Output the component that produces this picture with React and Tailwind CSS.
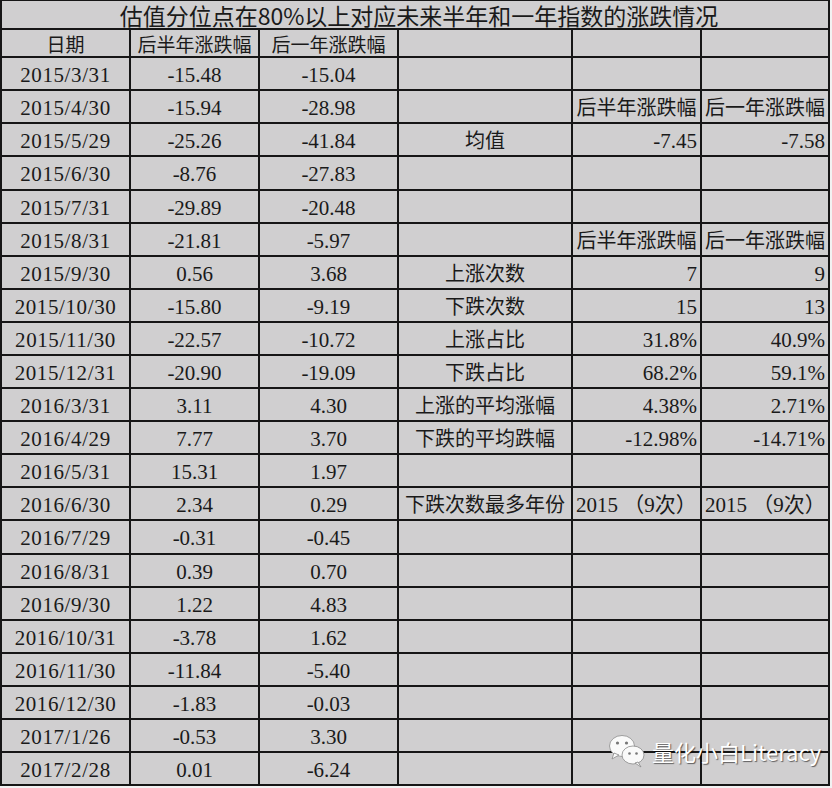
import React from "react";

const ROWS = [
  ["2015/3/31", "-15.48", "-15.04"],
  ["2015/4/30", "-15.94", "-28.98"],
  ["2015/5/29", "-25.26", "-41.84"],
  ["2015/6/30", "-8.76", "-27.83"],
  ["2015/7/31", "-29.89", "-20.48"],
  ["2015/8/31", "-21.81", "-5.97"],
  ["2015/9/30", "0.56", "3.68"],
  ["2015/10/30", "-15.80", "-9.19"],
  ["2015/11/30", "-22.57", "-10.72"],
  ["2015/12/31", "-20.90", "-19.09"],
  ["2016/3/31", "3.11", "4.30"],
  ["2016/4/29", "7.77", "3.70"],
  ["2016/5/31", "15.31", "1.97"],
  ["2016/6/30", "2.34", "0.29"],
  ["2016/7/29", "-0.31", "-0.45"],
  ["2016/8/31", "0.39", "0.70"],
  ["2016/9/30", "1.22", "4.83"],
  ["2016/10/31", "-3.78", "1.62"],
  ["2016/11/30", "-11.84", "-5.40"],
  ["2016/12/30", "-1.83", "-0.03"],
  ["2017/1/26", "-0.53", "3.30"],
  ["2017/2/28", "0.01", "-6.24"],
];

// right-hand summary block, keyed by data row index
const SIDE = {
  1: { kind: "head" },
  2: { label: "均值", a: "-7.45", b: "-7.58" },
  5: { kind: "head" },
  6: { label: "上涨次数", a: "7", b: "9" },
  7: { label: "下跌次数", a: "15", b: "13" },
  8: { label: "上涨占比", a: "31.8%", b: "40.9%" },
  9: { label: "下跌占比", a: "68.2%", b: "59.1%" },
  10: { label: "上涨的平均涨幅", a: "4.38%", b: "2.71%" },
  11: { label: "下跌的平均跌幅", a: "-12.98%", b: "-14.71%" },
  13: { label: "下跌次数最多年份", a: "2015 （9次）", b: "2015 （9次）", left: true },
};

const cell = "border-r-2 border-b-2 border-[#161616] flex items-center overflow-hidden whitespace-nowrap";
const cjk = "font-['Noto_Sans_CJK_SC','Noto_Sans',sans-serif]";
const serif = "font-['Liberation_Serif','Noto_Sans_CJK_SC',serif]";

function WeChatMark() {
  return (
    <svg width="38" height="34" viewBox="0 0 38 34">
      <g fill="#fafafa" stroke="#8a8a8a" strokeWidth="0.8">
        <ellipse cx="14" cy="12" rx="12.5" ry="10.5" />
        <path d="M6 19 L4 25 L11 21 Z" />
        <ellipse cx="25" cy="21" rx="11" ry="9" />
        <path d="M30 28 L33 33 L27 29 Z" />
      </g>
      <circle cx="9.5" cy="9" r="1.6" fill="#777" />
      <circle cx="18.5" cy="9" r="1.6" fill="#777" />
      <circle cx="21.5" cy="19.5" r="1.3" fill="#777" />
      <circle cx="28.5" cy="19.5" r="1.3" fill="#777" />
    </svg>
  );
}

export default function App() {
  return (
    <div className="w-[832px] h-[788px] bg-[#f2f2f2] text-[#1a1a1a]">
      <div className="relative w-[830px] bg-[#d0cfd0] border-l-2 border-t border-[#161616] grid grid-cols-[129px_129px_139px_174px_129px_128px]">
        {/* title */}
        <div className={`border-r-2 border-b-2 border-[#161616] col-span-6 h-[29px] flex items-center justify-center whitespace-nowrap ${cjk} text-[23px] leading-[24px] pl-2`}>
          估值分位点在80%以上对应未来半年和一年指数的涨跌情况
        </div>

        {/* header */}
        <div className={`${cell} h-[28px] justify-center ${cjk} text-[19px] leading-none`}>日期</div>
        <div className={`${cell} h-[28px] justify-center ${cjk} text-[19px] leading-none`}>后半年涨跌幅</div>
        <div className={`${cell} h-[28px] justify-center ${cjk} text-[19px] leading-none`}>后一年涨跌幅</div>
        <div className={`${cell} h-[28px]`} />
        <div className={`${cell} h-[28px]`} />
        <div className={`${cell} h-[28px]`} />

        {ROWS.map((r, i) => {
          const s = SIDE[i];
          const h = i === 3 || i === 14 ? "h-[34px]" : "h-[33px]";
          return (
            <React.Fragment key={r[0]}>
              <div className={`${cell} ${h} justify-center ${serif} text-[21px] tracking-[0.6px] pt-1`}>{r[0]}</div>
              <div className={`${cell} ${h} justify-center ${serif} text-[21px] pt-1`}>{r[1]}</div>
              <div className={`${cell} ${h} justify-center ${serif} text-[21px] pt-1`}>{r[2]}</div>
              {s && s.kind === "head" ? (
                <>
                  <div className={`${cell} ${h}`} />
                  <div className={`${cell} ${h} justify-center ${cjk} text-[20px] leading-none`}>后半年涨跌幅</div>
                  <div className={`${cell} ${h} justify-center ${cjk} text-[20px] leading-none`}>后一年涨跌幅</div>
                </>
              ) : s ? (
                <>
                  <div className={`${cell} ${h} justify-center ${cjk} text-[20px] leading-none`}>{s.label}</div>
                  <div className={`${cell} ${h} ${s.left ? "justify-start pl-[3px]" : "justify-end pr-[3px]"} ${serif} text-[21px] pt-1`}>{s.a}</div>
                  <div className={`${cell} ${h} ${s.left ? "justify-start pl-[3px]" : "justify-end pr-[3px]"} ${serif} text-[21px] pt-1`}>{s.b}</div>
                </>
              ) : (
                <>
                  <div className={`${cell} ${h}`} />
                  <div className={`${cell} ${h}`} />
                  <div className={`${cell} ${h}`} />
                </>
              )}
            </React.Fragment>
          );
        })}

        {/* watermark */}
        <div className="absolute left-[606px] top-[733px] flex items-center gap-[6px]">
          <WeChatMark />
          <span className={`${cjk} text-[22px] leading-none text-white [text-shadow:1px_1px_1px_rgba(0,0,0,0.55)]`}>量化小白Literacy</span>
        </div>
      </div>
    </div>
  );
}
